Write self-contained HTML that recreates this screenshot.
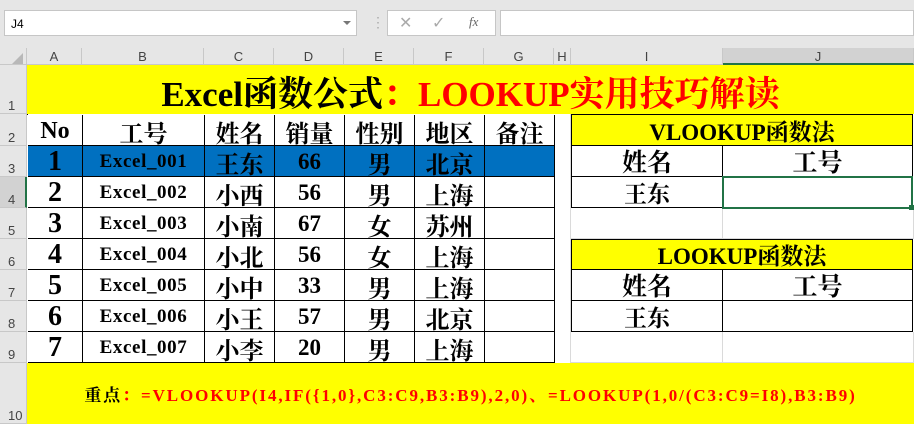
<!DOCTYPE html>
<html><head><meta charset="utf-8"><style>
*{margin:0;padding:0;box-sizing:border-box}
body{width:914px;height:424px;overflow:hidden;background:#fff;position:relative;font-family:"Liberation Serif","Noto Serif CJK SC",serif}
.a{position:absolute}
.top{left:0;top:0;width:914px;height:48px;background:#e6e6e6}
.box{background:#fff;border:1px solid #c6c6c6}
.ch{top:48px;height:17px;background:#e6e6e6;border-right:1px solid #c8c8c8;border-bottom:1px solid #c8c8c8;font:13px "Liberation Sans",sans-serif;color:#444;text-align:center;line-height:17px}
.rh{left:0;width:27px;background:#e6e6e6;border-bottom:1px solid #c8c8c8;border-right:1px solid #c8c8c8;font:13px "Liberation Sans",sans-serif;color:#444;padding-left:8px;display:flex;align-items:flex-end}
.c{display:flex;align-items:center;justify-content:center;font-weight:bold;color:#000;border-right:1px solid #000;border-bottom:1px solid #000;white-space:nowrap;font-family:"Liberation Serif","Noto Serif CJK SC",serif}
.g{border-right:1px solid #dadada;border-bottom:1px solid #dadada}
</style></head><body>
<div class="a top"></div>
<div class="a box" style="left:4px;top:10px;width:353px;height:26px;font:12px 'Liberation Sans',sans-serif;padding:6px 6px">J4</div>
<div class="a" style="left:343px;top:21px;width:0;height:0;border-left:4px solid transparent;border-right:4px solid transparent;border-top:4px solid #777"></div>
<div class="a" style="left:371px;top:14px;color:#aaa;font:14px sans-serif">⋮</div>
<div class="a box" style="left:387px;top:10px;width:109px;height:26px;color:#aaa;font:16px 'DejaVu Sans',sans-serif"><span class="a" style="left:11px;top:2px">✕</span><span class="a" style="left:44px;top:2px">✓</span><span class="a" style="left:81px;top:3px;font:italic 13px 'Liberation Serif',serif;color:#666">fx</span></div>
<div class="a box" style="left:500px;top:10px;width:414px;height:26px"></div>
<div class="a" style="left:0;top:48px;width:27px;height:17px;background:#e6e6e6;border-right:1px solid #c8c8c8;border-bottom:1px solid #c8c8c8"></div>
<div class="a" style="left:12px;top:53px;width:0;height:0;border-left:11px solid transparent;border-bottom:11px solid #b8b8b8"></div>
<div class="a ch" style="left:27px;width:55px">A</div>
<div class="a ch" style="left:82px;width:122px">B</div>
<div class="a ch" style="left:204px;width:70px">C</div>
<div class="a ch" style="left:274px;width:70px">D</div>
<div class="a ch" style="left:344px;width:70px">E</div>
<div class="a ch" style="left:414px;width:70px">F</div>
<div class="a ch" style="left:484px;width:70px">G</div>
<div class="a ch" style="left:554px;width:17px">H</div>
<div class="a ch" style="left:571px;width:152px">I</div>
<div class="a ch" style="left:723px;width:191px;background:#d2d2d2;border-bottom:2px solid #217346">J</div>

<div class="a rh" style="top:65px;height:49px">1</div>
<div class="a rh" style="top:114px;height:32px">2</div>
<div class="a rh" style="top:146px;height:31px">3</div>
<div class="a rh" style="top:177px;height:31px;background:#d2d2d2;border-right:2px solid #217346">4</div>
<div class="a rh" style="top:208px;height:31px">5</div>
<div class="a rh" style="top:239px;height:31px">6</div>
<div class="a rh" style="top:270px;height:31px">7</div>
<div class="a rh" style="top:301px;height:31px">8</div>
<div class="a rh" style="top:332px;height:31px">9</div>
<div class="a rh" style="top:363px;height:61px">10</div>

<div class="a g" style="left:554px;top:114px;width:17px;height:249px;border-bottom:none"></div>
<div class="a g" style="left:571px;top:208px;width:152px;height:31px"></div>
<div class="a g" style="left:723px;top:208px;width:191px;height:31px"></div>
<div class="a g" style="left:571px;top:332px;width:152px;height:31px"></div>
<div class="a g" style="left:723px;top:332px;width:191px;height:31px"></div>

<div class="a" style="left:27px;top:65px;width:887px;height:49px;background:#ff0;display:flex;align-items:center;justify-content:center;font-weight:bold;font-size:35px;padding-top:4px;white-space:nowrap;font-family:'Liberation Serif','Noto Serif CJK SC',serif">Excel函数公式<span style="color:#f00">：LOOKUP实用技巧解读</span></div>

<div class="a" style="left:27px;top:363px;width:887px;height:61px;background:#ff0;display:flex;align-items:center;justify-content:center;font-weight:bold;font-size:17px;letter-spacing:1.9px;color:#f00;white-space:nowrap;font-family:'Liberation Serif','Noto Serif CJK SC',serif"><span style="color:#000">重点</span>：=VLOOKUP(I4,IF({1,0},C3:C9,B3:B9),2,0)、=LOOKUP(1,0/(C3:C9=I8),B3:B9)</div>

<div id="t" class="a" style="left:27px;top:114px;border-left:1px solid #000;border-top:1px solid #000"></div>
<script>
var cols=[55,122,70,70,70,70,70];
var rows=[["No","工号","姓名","销量","性别","地区","备注"],["1","Excel_001","王东","66","男","北京",""],["2","Excel_002","小西","56","男","上海",""],["3","Excel_003","小南","67","女","苏州",""],["4","Excel_004","小北","56","女","上海",""],["5","Excel_005","小中","33","男","上海",""],["6","Excel_006","小王","57","男","北京",""],["7","Excel_007","小李","20","男","上海",""]];
var h='';var y=0;
rows.forEach(function(r,i){var x=0;var hh=31;r.forEach(function(v,j){
var fs=j==0?(i==0?24:28):(j==1&&i>0?19:(j==3&&i>0?23:24));
var bg=i==1?'background:#0070c0;':'';
var ls=(j==1&&i>0)?'letter-spacing:0.6px;':'';
h+='<div class="a c" style="left:'+x+'px;top:'+y+'px;width:'+cols[j]+'px;height:'+hh+'px;font-size:'+fs+'px;'+bg+ls+'padding-top:2px">'+v+'</div>';x+=cols[j];});y+=hh;});
document.getElementById('t').innerHTML=h;
</script>

<div class="a c" style="left:571px;top:114px;width:342px;height:32px;background:#ff0;border-left:1px solid #000;border-top:1px solid #000;font-size:23px">VLOOKUP函数法</div>
<div class="a c" style="left:571px;top:146px;width:152px;height:31px;border-left:1px solid #000;font-size:25px">姓名</div>
<div class="a c" style="left:723px;top:146px;width:190px;height:31px;font-size:25px">工号</div>
<div class="a c" style="left:571px;top:177px;width:152px;height:31px;border-left:1px solid #000;font-size:23px">王东</div>
<div class="a c" style="left:723px;top:177px;width:190px;height:31px"></div>
<div class="a" style="left:722px;top:176px;width:191px;height:33px;border:2px solid #217346"></div>
<div class="a" style="left:909px;top:205px;width:5px;height:5px;background:#217346"></div>

<div class="a c" style="left:571px;top:239px;width:342px;height:31px;background:#ff0;border-left:1px solid #000;border-top:1px solid #000;font-size:23px">LOOKUP函数法</div>
<div class="a c" style="left:571px;top:270px;width:152px;height:31px;border-left:1px solid #000;font-size:25px">姓名</div>
<div class="a c" style="left:723px;top:270px;width:190px;height:31px;font-size:25px">工号</div>
<div class="a c" style="left:571px;top:301px;width:152px;height:31px;border-left:1px solid #000;font-size:23px">王东</div>
<div class="a c" style="left:723px;top:301px;width:190px;height:31px"></div>
</body></html>
